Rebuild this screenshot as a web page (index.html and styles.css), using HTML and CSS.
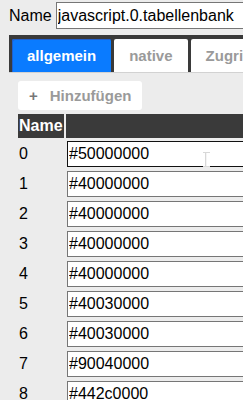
FILE: index.html
```html
<!DOCTYPE html>
<html lang="de">
<head>
	<meta charset="UTF-8">
	<title>Tabellenbank</title>
	<link rel="stylesheet" href="styles.css">
</head>
<body>
	<div class="nameRow">
		<label class="nameRow__label" for="objName">Name</label>
		<input class="nameRow__input" id="objName" type="text" value="javascript.0.tabellenbank">
	</div>

	<div class="tabs">
		<div class="tabs__tab tabs__tab--active">allgemein</div>
		<div class="tabs__tab">native</div>
		<div class="tabs__tab">Zugriffsrechte</div>
	</div>

	<div class="content">
		<button class="content__add" type="button"><span class="content__plus">+</span>Hinzufügen</button>

		<table class="grid">
			<thead>
				<tr>
					<th class="grid__name">Name</th>
					<th class="grid__value"></th>
				</tr>
			</thead>
			<tbody>
				<tr><td class="grid__idx">0</td><td><input class="grid__input grid__input--hover" type="text" value="#50000000"><span class="ibeam"></span></td></tr>
				<tr><td class="grid__idx">1</td><td><input class="grid__input" type="text" value="#40000000"></td></tr>
				<tr><td class="grid__idx">2</td><td><input class="grid__input" type="text" value="#40000000"></td></tr>
				<tr><td class="grid__idx">3</td><td><input class="grid__input" type="text" value="#40000000"></td></tr>
				<tr><td class="grid__idx">4</td><td><input class="grid__input" type="text" value="#40000000"></td></tr>
				<tr><td class="grid__idx">5</td><td><input class="grid__input" type="text" value="#40030000"></td></tr>
				<tr><td class="grid__idx">6</td><td><input class="grid__input" type="text" value="#40030000"></td></tr>
				<tr><td class="grid__idx">7</td><td><input class="grid__input" type="text" value="#90040000"></td></tr>
				<tr><td class="grid__idx">8</td><td><input class="grid__input" type="text" value="#442c0000"></td></tr>
			</tbody>
		</table>
	</div>
</body>
</html>
```

FILE: styles.css
```css
html, body {
	margin: 0;
	overflow: hidden;
}
body {
	background-color: #ececec;
	font-family: "Liberation Sans", Arial, sans-serif;
	font-size: 16px;
	color: #000;
	width: 243px;
	height: 400px;
}
.nameRow {
	display: flex;
	align-items: center;
	gap: 4px;
	padding: 2px 0 0 9px;
}
.nameRow__label {
	white-space: nowrap;
}
.nameRow__input {
	flex: none;
	width: 230px;
	height: 27px;
	box-sizing: border-box;
	border: 1px solid #767676;
	background-color: #fff;
	padding: 0 1px;
	font-family: inherit;
	font-size: 16px;
	color: #000;
	outline: none;
}
.tabs {
	display: flex;
	gap: 3px;
	margin: 6px 0 0 9px;
	padding: 4px 0 0 3px;
	background-color: #3a3a3a;
	border-bottom: 1px solid #d2d2d2;
	white-space: nowrap;
	overflow: hidden;
}
.tabs__tab {
	flex: none;
	height: 33px;
	line-height: 33px;
	padding: 0 15px;
	background-color: #fff;
	color: #9a9a9a;
	font-weight: bold;
	font-size: 15px;
	border-radius: 2px 2px 0 0;
}
.tabs__tab--active {
	background-color: #0a7bff;
	color: #fff;
	box-shadow: inset 1px 1px 0 #1f5fcf;
}
.content {
	padding: 8px 0 0 18px;
}
.content__add {
	display: flex;
	align-items: center;
	width: 124px;
	height: 29px;
	padding: 0 0 0 11px;
	border: none;
	border-radius: 3px;
	background-color: #fff;
	color: #9a9a9a;
	font-family: inherit;
	font-weight: bold;
	font-size: 15px;
}
.content__plus {
	color: #777;
	margin-right: 12px;
}
.grid {
	border-spacing: 2px;
	margin: 2px 0 0 -2px;
	width: 300px;
}
.grid th {
	background-color: #3a3a3a;
	height: 24px;
	padding: 0 1px;
	text-align: left;
	vertical-align: middle;
	color: #fff;
	font-size: 16px;
	font-weight: bold;
}
.grid__name {
	width: 44px;
}
.grid td {
	padding: 1px;
	height: 26px;
	position: relative;
}
.grid__idx {
	vertical-align: middle;
}
.grid__input {
	display: block;
	width: 200px;
	height: 26px;
	box-sizing: border-box;
	border: 1px solid #767676;
	background-color: #fff;
	padding: 0 1px;
	font-family: inherit;
	font-size: 16px;
	color: #000;
	outline: none;
}
.grid__input--hover {
	border-color: #111;
}
.ibeam {
	position: absolute;
	left: 139px;
	top: 12px;
	width: 1px;
	height: 15px;
	background-color: #f4f4f4;
	border-left: 1px solid #d8d8d8;
}
.ibeam::before,
.ibeam::after {
	content: "";
	position: absolute;
	left: -3px;
	width: 7px;
	height: 1px;
	background-color: #d8d8d8;
}
.ibeam::before {
	top: 0;
}
.ibeam::after {
	bottom: 0;
}
```
